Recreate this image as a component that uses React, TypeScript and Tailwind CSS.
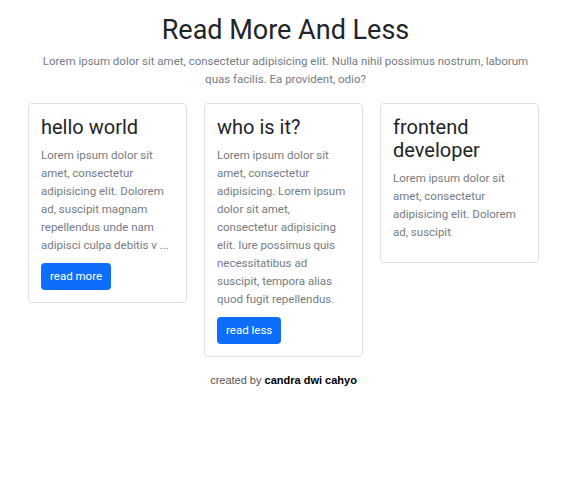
const cards = [
  {
    title: "hello world",
    body: "Lorem ipsum dolor sit amet, consectetur adipisicing elit. Dolorem ad, suscipit magnam repellendus unde nam adipisci culpa debitis v ...",
    button: "read more",
  },
  {
    title: "who is it?",
    body: "Lorem ipsum dolor sit amet, consectetur adipisicing. Lorem ipsum dolor sit amet, consectetur adipisicing elit. Iure possimus quis necessitatibus ad suscipit, tempora alias quod fugit repellendus.",
    button: "read less",
  },
  {
    title: "frontend developer",
    body: "Lorem ipsum dolor sit amet, consectetur adipisicing elit. Dolorem ad, suscipit",
    button: null,
  },
]

export default function App() {
  return (
    <div className="min-h-[487px] bg-white font-['Roboto',sans-serif] text-[#212529]">
      <div className="pt-[13px] text-center">
        <h1 className="text-[27px] leading-[34px]">Read More And Less</h1>
        <p className="mx-auto mt-[5px] w-[500px] text-[11.5px] leading-[18px] text-[#747c84]">
          Lorem ipsum dolor sit amet, consectetur adipisicing elit. Nulla nihil possimus nostrum, laborum quas facilis. Ea provident, odio?
        </p>
      </div>
      <div className="mt-[15px] flex items-start justify-center gap-[17px] pr-[4px]">
        {cards.map((card, index) => (
          <div key={index} className="w-[159px] rounded-[4px] border border-[#dee2e6] p-[12px]">
            <h4 className="mb-[7px] text-[20px] leading-[23px]">{card.title}</h4>
            <p className="mb-[9px] text-[11.5px] leading-[18px] text-[#747c84]">{card.body}</p>
            {card.button && (
              <button className="h-[27px] rounded-[4px] bg-[#0d6efd] px-[9px] text-[11.5px] text-white">
                {card.button}
              </button>
            )}
          </div>
        ))}
      </div>
      <p className="mt-[15px] pr-[4px] text-center font-['Liberation_Sans',sans-serif] text-[11px] text-[#555]">
        created by <span className="font-bold text-black">candra dwi cahyo</span>
      </p>
    </div>
  )
}
